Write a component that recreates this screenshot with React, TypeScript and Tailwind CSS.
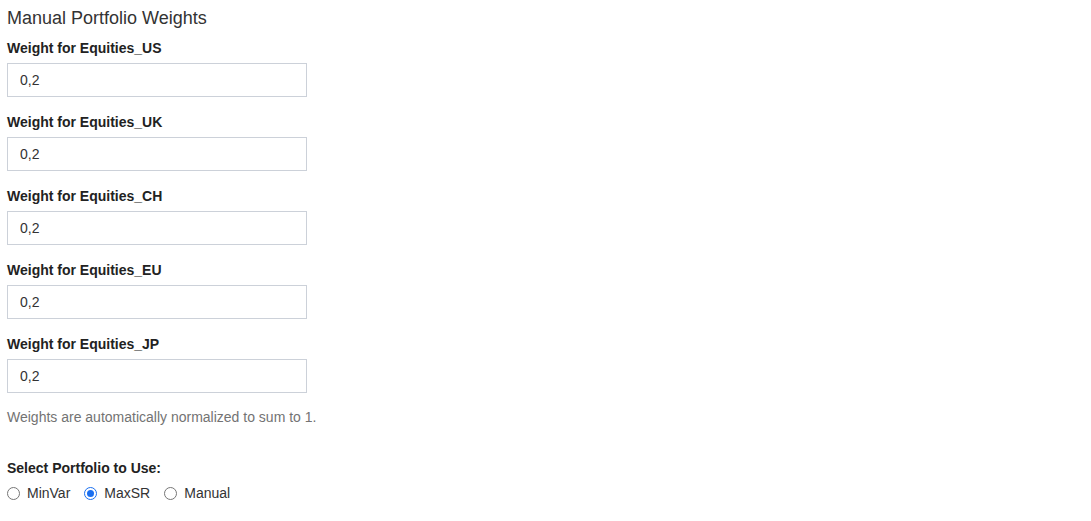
import React, { useState } from 'react';

const assets = ['Equities_US', 'Equities_UK', 'Equities_CH', 'Equities_EU', 'Equities_JP'];
const portfolios = ['MinVar', 'MaxSR', 'Manual'];

function Radio({ checked }: { checked: boolean }) {
  return checked ? (
    <span className="w-[13px] h-[13px] rounded-full border-[1.5px] border-[#1a6ff0] bg-white flex items-center justify-center shrink-0">
      <span className="w-[7px] h-[7px] rounded-full bg-[#1a6ff0]" />
    </span>
  ) : (
    <span className="w-[13px] h-[13px] rounded-full border border-[#767676] bg-white shrink-0" />
  );
}

export default function App() {
  const [selected, setSelected] = useState('MaxSR');

  return (
    <div className="w-[1091px] h-[521px] bg-white pl-[7px] text-[#333] font-['Liberation_Sans',Arial,sans-serif]">
      <h4 className="pt-[7px] text-[18px] leading-[22px] font-normal text-[#333]">Manual Portfolio Weights</h4>

      <div className="mt-[9px] flex flex-col">
        {assets.map((a) => (
          <div key={a} className="mb-[15px]">
            <label className="block text-[14px] leading-[20px] font-bold text-[#222] mb-[5px]">
              Weight for {a}
            </label>
            <input
              defaultValue="0,2"
              className="w-[300px] h-[34px] border border-[#ccd1d9] px-[12px] text-[14px] text-[#333] outline-none"
            />
          </div>
        ))}
      </div>

      <p className="-mt-[1px] text-[14px] leading-[20px] text-[#737373]">
        Weights are automatically normalized to sum to 1.
      </p>

      <div className="mt-[31px] text-[14px] leading-[20px] font-bold text-[#222]">Select Portfolio to Use:</div>
      <div className="mt-[5px] flex items-center gap-[14px]">
        {portfolios.map((p) => (
          <button key={p} onClick={() => setSelected(p)} className="flex items-center gap-[7px] text-[14px] leading-[20px] text-[#333]">
            <Radio checked={selected === p} />
            <span>{p}</span>
          </button>
        ))}
      </div>
    </div>
  );
}
